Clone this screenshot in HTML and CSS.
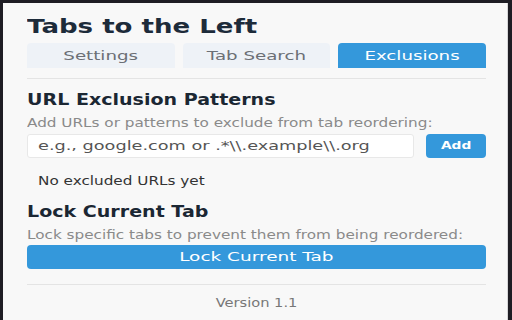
FILE: index.html
```html
<!DOCTYPE html>
<html>
<head>
<meta charset="utf-8">
<link rel="stylesheet" href="styles.css">
</head>
<body>
<div class="panel">
  <h1 class="title"><span class="txt">Tabs to the Left</span></h1>
  <div class="tabs">
    <div class="tab"><span class="txt">Settings</span></div>
    <div class="tab"><span class="txt">Tab Search</span></div>
    <div class="tab active"><span class="txt">Exclusions</span></div>
  </div>
  <div class="section">
    <h2 class="heading"><span class="txt">URL Exclusion Patterns</span></h2>
    <p class="desc"><span class="txt">Add URLs or patterns to exclude from tab reordering:</span></p>
    <div class="input-row">
      <div class="input"><span class="txt">e.g., google.com or .*\\.example\\.org</span></div>
      <div class="add-btn"><span class="txt">Add</span></div>
    </div>
    <p class="empty"><span class="txt">No excluded URLs yet</span></p>
    <h2 class="heading lock-heading"><span class="txt">Lock Current Tab</span></h2>
    <p class="desc desc-lock"><span class="txt">Lock specific tabs to prevent them from being reordered:</span></p>
    <div class="lock-btn"><span class="txt">Lock Current Tab</span></div>
  </div>
  <div class="footer"><span class="txt">Version 1.1</span></div>
</div>
</body>
</html>
```

FILE: styles.css
```css
html, body {
  margin: 0;
  padding: 0;
  height: 100%;
  background: #1e1d24;
  overflow: hidden;
}
body {
  font-family: "DejaVu Sans", sans-serif;
}
.txt {
  display: inline-block;
  white-space: nowrap;
  transform-origin: 0 50%;
  transform: scaleX(1.27);
}
.panel {
  margin: 3px 4px 0 3px;
  height: 317px;
  background: #f8f8f8;
  padding: 0 21px 0 24px;
  border-right: 1px solid #d6d6d8;
  box-sizing: border-box;
}
.title {
  margin: 0;
  padding-top: 11px;
  font-size: 19px;
  font-weight: 600;
  color: #1d2b3a;
  line-height: 24px;
}
.title .txt {
  transform: scaleX(1.37);
}
.tabs {
  display: flex;
  gap: 8px;
  margin-top: 5px;
}
.tab {
  flex: 1;
  height: 25px;
  line-height: 25px;
  text-align: center;
  font-size: 13px;
  color: #6b6f75;
  background: #eef2f7;
  border-radius: 4px 4px 0 0;
}
.tab .txt {
  transform-origin: 50% 50%;
  transform: scaleX(1.4);
}
.tab.active {
  background: #3498db;
  color: #fff;
}
.section {
  border-top: 1px solid #e4e4e4;
  margin-top: 10px;
}
.heading {
  margin: 11px 0 0;
  font-size: 15px;
  font-weight: 700;
  color: #1b2733;
  line-height: 20px;
}
.desc {
  margin: 5px 0 0;
  font-size: 12px;
  color: #8a8a8a;
  line-height: 16px;
}
.input-row {
  display: flex;
  gap: 12px;
  margin-top: 3px;
}
.input {
  flex: 1;
  height: 24px;
  line-height: 22px;
  background: #fff;
  border: 1px solid #e8e8e8;
  border-radius: 3px;
  padding-left: 10px;
  font-size: 13px;
  color: #555;
  box-sizing: border-box;
}
.input .txt {
  transform: scaleX(1.36);
}
.add-btn {
  width: 60px;
  height: 24px;
  line-height: 24px;
  background: #3498db;
  border-radius: 4px;
  color: #fff;
  font-size: 11px;
  font-weight: 700;
  text-align: center;
}
.add-btn .txt {
  transform-origin: 50% 50%;
  transform: scaleX(1.25);
}
.empty {
  margin: 15px 0 0 11px;
  font-size: 12px;
  color: #333;
  line-height: 16px;
}
.lock-heading {
  margin-top: 13px;
}
.desc-lock {
  margin-top: 5px;
}
.lock-btn {
  margin-top: 2px;
  height: 24px;
  line-height: 24px;
  background: #3498db;
  border-radius: 4px;
  color: #fff;
  font-size: 13px;
  text-align: center;
}
.lock-btn .txt {
  transform-origin: 50% 50%;
  transform: scaleX(1.42);
}
.footer {
  border-top: 1px solid #e4e4e4;
  margin-top: 15px;
  padding-top: 10px;
  text-align: center;
  font-size: 12px;
  line-height: 16px;
  color: #777;
}
.footer .txt {
  transform-origin: 50% 50%;
  transform: scaleX(1.22);
}
```
